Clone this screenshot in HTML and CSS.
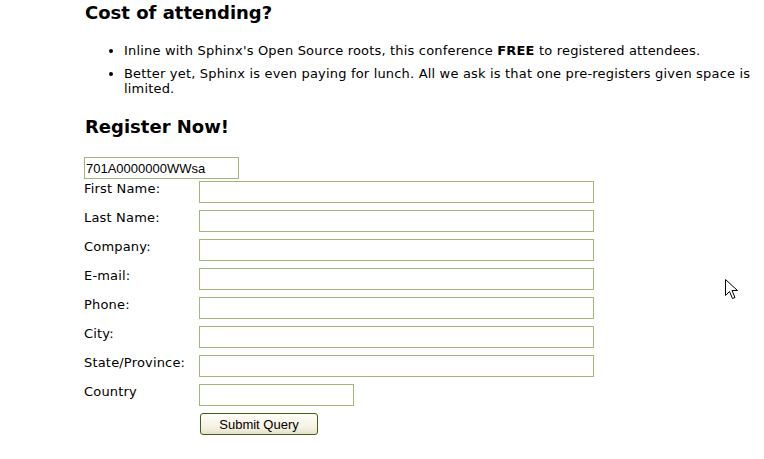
FILE: index.html
```html
<!DOCTYPE html>
<html>
<head>
<meta charset="utf-8">
<link rel="stylesheet" href="styles.css">
</head>
<body>
<div class="page">
  <h2 class="title">Cost of attending?</h2>
  <ul class="points">
    <li>Inline with Sphinx's Open Source roots, this conference <b>FREE</b> to registered attendees.</li>
    <li>Better yet, Sphinx is even paying for lunch. All we ask is that one pre-registers given space is limited.</li>
  </ul>
  <h2 class="title reg">Register Now!</h2>
  <form class="form">
    <input class="code" type="text" value="701A0000000WWsa">
    <div class="grid">
      <label>First Name:</label><input class="wide" type="text">
      <label>Last Name:</label><input class="wide" type="text">
      <label>Company:</label><input class="wide" type="text">
      <label>E-mail:</label><input class="wide" type="text">
      <label>Phone:</label><input class="wide" type="text">
      <label>City:</label><input class="wide" type="text">
      <label>State/Province:</label><input class="wide" type="text">
      <label>Country</label><input class="short" type="text">
      <span></span><button class="submit" type="button">Submit Query</button>
    </div>
  </form>
</div>
<svg class="cursor" width="14" height="22" viewBox="0 0 14 22">
  <path d="M0.5 0.5 L0.5 16.5 L4.5 12.5 L7.5 19.5 L10 18.5 L7 11.5 L12.5 11.5 Z" fill="#fff" stroke="#000" stroke-width="1"/>
</svg>
</body>
</html>
```
FILE: styles.css
```css
html, body {
  margin: 0;
  padding: 0;
  background: #fff;
}
body {
  font-family: "DejaVu Sans", Verdana, sans-serif;
  font-size: 13px;
  letter-spacing: 0.18px;
  line-height: 15px;
  color: #000;
}
.page {
  padding: 2px 4px 0 84px;
}
.title {
  margin: 0;
  padding-left: 1px;
  font-size: 18px;
  line-height: 22px;
  font-weight: bold;
  letter-spacing: 0;
}
.points {
  margin: 19px 0 0 0;
  padding-left: 40px;
}
.points li {
  margin-bottom: 8px;
}
.points li:last-child {
  margin-bottom: 0;
}
.reg {
  margin-top: 20px;
}
.form {
  margin-top: 19px;
}
input {
  box-sizing: border-box;
  height: 22px;
  border: 1px solid #a0b879;
  padding: 1px 1px;
  margin: 0;
  font-family: "Liberation Sans", Arial, sans-serif;
  font-size: 13px;
  letter-spacing: 0;
  background: #fff;
  outline: none;
}
.code {
  display: block;
  width: 155px;
}
.grid {
  margin-top: 2px;
  display: grid;
  grid-template-columns: 115px auto;
  row-gap: 7px;
  align-items: start;
  justify-items: start;
}
.wide {
  width: 395px;
}
.short {
  width: 155px;
}
.submit {
  margin: 0 0 0 1px;
  box-sizing: border-box;
  width: 118px;
  height: 22px;
  border: 1px solid #3f5f18;
  border-radius: 3px;
  background: linear-gradient(#fffef8, #f4f1e2 70%, #e4e0c8);
  font-family: "Liberation Sans", Arial, sans-serif;
  font-size: 13px;
  letter-spacing: 0;
  color: #000;
  padding: 0;
}
.cursor {
  position: absolute;
  left: 725px;
  top: 279px;
}
```
